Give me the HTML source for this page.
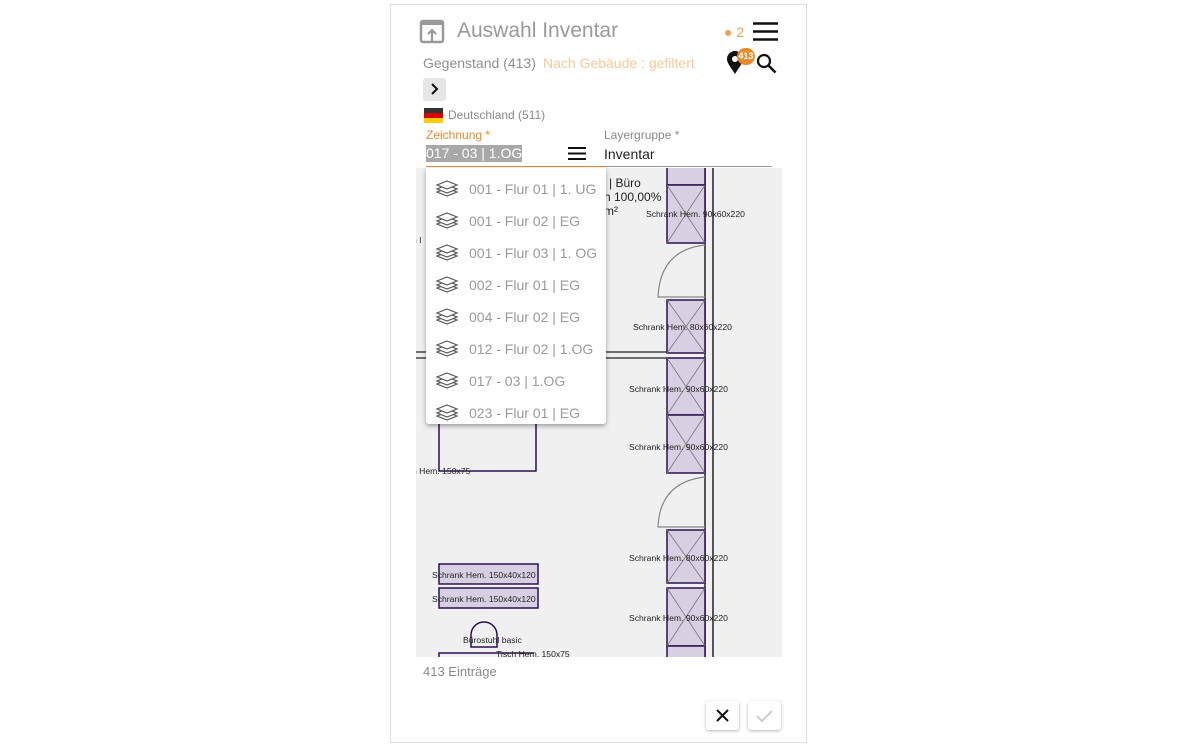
<!DOCTYPE html>
<html><head><meta charset="utf-8"><style>
body{margin:0;width:1200px;height:745px;background:#fff;font-family:"Liberation Sans",sans-serif;position:relative;overflow:hidden}
.a{position:absolute}
.card{left:390px;top:4px;width:415px;height:737px;border:1px solid #ddd;background:#fff}
.dd{left:426px;top:168px;width:180px;height:256px;background:#fff;box-shadow:0 2px 5px rgba(0,0,0,.35);border-radius:0 0 3px 3px;overflow:hidden}
.it{position:absolute;left:9px;height:32px;font-size:14px;color:#9a9a9a;display:flex;align-items:center;gap:10px;white-space:nowrap}
.btn{top:701px;width:33px;height:29px;background:#fff;border-radius:3px;box-shadow:0 1px 3px rgba(0,0,0,.3)}
</style></head><body>
<div class="a card"></div>
<svg class="a" style="left:419px;top:19px" width="26" height="26" viewBox="0 0 26 26"><rect x="2" y="2" width="22" height="21" rx="2" fill="none" stroke="#999" stroke-width="2.5"/><rect x="2" y="2" width="22" height="4" fill="#999"/><path d="M13 22V11M9 15l4-4 4 4" stroke="#999" stroke-width="2.2" fill="none"/></svg>
<div class="a" style="left:457px;top:19px;font-size:21px;color:#9a9a9a">Auswahl Inventar</div>
<div class="a" style="left:724px;top:24px;font-size:14px;color:#f0a050">● 2</div>
<svg class="a" style="left:752px;top:21px" width="27" height="21"><path d="M1 2.5h25M1 10.5h25M1 18.5h25" stroke="#111" stroke-width="2.6"/></svg>
<div class="a" style="left:423px;top:55px;font-size:14px;color:#8f8f8f">Gegenstand (413)</div>
<div class="a" style="left:543px;top:55px;font-size:14px;color:#f8c89a">Nach Gebäude : gefiltert</div>
<svg class="a" style="left:726px;top:51px" width="18" height="24"><path d="M9 23C4 15 1 12 1 8a8 8 0 0 1 16 0c0 4-3 7-8 15z" fill="#111"/><circle cx="9" cy="8" r="3" fill="#fff"/></svg>
<div class="a" style="left:737px;top:48px;width:18px;height:17px;border-radius:9px;background:#e88a2a;color:#fff;font-size:9px;font-weight:bold;text-align:center;line-height:17px">413</div>
<svg class="a" style="left:756px;top:53px" width="22" height="22"><circle cx="8" cy="8" r="6" fill="none" stroke="#111" stroke-width="2.2"/><path d="M12.5 12.5l7 7" stroke="#111" stroke-width="2.6"/></svg>
<div class="a" style="left:423px;top:78px;width:23px;height:23px;background:#e6e6e6;border-radius:3px"></div>
<svg class="a" style="left:428px;top:82px" width="14" height="14"><path d="M4 2l5 5-5 5" stroke="#111" stroke-width="2" fill="none"/></svg>
<div class="a" style="left:424px;top:108px;width:19px;height:5px;background:#333"></div>
<div class="a" style="left:424px;top:113px;width:19px;height:5px;background:#d00"></div>
<div class="a" style="left:424px;top:118px;width:19px;height:5px;background:#fc0"></div>
<div class="a" style="left:448px;top:108px;font-size:12px;color:#8a8a8a">Deutschland (511)</div>
<div class="a" style="left:426px;top:128px;font-size:12px;color:#e88a2a">Zeichnung *</div>
<div class="a" style="left:426px;top:145px;font-size:14px;color:#fff;background:#a8a8a8;line-height:17px">017 - 03 | 1.OG</div>
<svg class="a" style="left:567px;top:146px" width="20" height="15"><path d="M1 2h18M1 7.5h18M1 13h18" stroke="#111" stroke-width="2"/></svg>
<div class="a" style="left:426px;top:166px;width:178px;height:1px;background:#e88a2a"></div>
<div class="a" style="left:604px;top:128px;font-size:12px;color:#8a8a8a">Layergruppe *</div>
<div class="a" style="left:604px;top:146px;font-size:14px;color:#222">Inventar</div>
<div class="a" style="left:604px;top:166px;width:168px;height:1px;background:#999"></div>
<svg class="a" style="left:0;top:0" width="1200" height="745">
<defs><clipPath id="c"><rect x="416" y="168" width="366" height="489"/></clipPath></defs>
<g clip-path="url(#c)" font-family="Liberation Sans" font-size="8.6" fill="#222">
<rect x="416" y="168" width="366" height="489" fill="#f0f0f0"/>
<path d="M705 160V660M713 160V660" stroke="#222" stroke-width="1.5"/>
<path d="M416 352H667M416 358H667" stroke="#222" stroke-width="1.3"/>
<g fill="#d8d0e2" stroke="#2a1050" stroke-width="1.5">
<rect x="667" y="160" width="38" height="25"/><rect x="667" y="185" width="38" height="58"/><rect x="667" y="300" width="38" height="53"/><rect x="667" y="358" width="38" height="57"/><rect x="667" y="415" width="38" height="58"/><rect x="667" y="530" width="38" height="53"/><rect x="667" y="588" width="38" height="58"/><rect x="667" y="646" width="38" height="20"/>
<rect x="439" y="564" width="99" height="20"/><rect x="439" y="588" width="99" height="20"/>
</g>
<g stroke="#777" stroke-width="0.8"><path d="M667 185L705 243M705 185L667 243M667 300L705 353M705 300L667 353M667 358L705 415M705 358L667 415M667 415L705 473M705 415L667 473M667 530L705 583M705 530L667 583M667 588L705 646M705 588L667 646"/></g>
<g fill="none" stroke="#888" stroke-width="1.2"><path d="M705 245Q660 250 658 297H705M705 477Q660 482 658 527H705"/></g>
<rect x="439" y="420" width="97" height="51" fill="none" stroke="#2a1050" stroke-width="1.5"/>
<path d="M471 647v-12a13 13 0 0 1 26 0v12z" fill="none" stroke="#2a1050" stroke-width="1.5"/>
<path d="M439 657v-4h95" fill="none" stroke="#2a1050" stroke-width="1.5"/>
<text x="646" y="217">Schrank Hem. 90x60x220</text>
<text x="633" y="330">Schrank Hem. 80x60x220</text>
<text x="629" y="392">Schrank Hem. 90x60x220</text>
<text x="629" y="450">Schrank Hem. 90x60x220</text>
<text x="629" y="561">Schrank Hem. 80x60x220</text>
<text x="629" y="621">Schrank Hem. 90x60x220</text>
<text x="432" y="578">Schrank Hem. 150x40x120</text>
<text x="432" y="602">Schrank Hem. 150x40x120</text>
<text x="463" y="643">Bürostuhl basic</text>
<text x="496" y="657">Tisch Hem. 150x75</text>
<text x="412" y="474">h Hem. 150x75</text>
<text x="412" y="243">h I</text>
<text x="609" y="187" font-size="12">| Büro</text>
<text x="604" y="201" font-size="12">h 100,00%</text>
<text x="604" y="215" font-size="12">m²</text>
</g></svg>
<div class="a dd">
<div class="it" style="top:5px"><svg width="24" height="20" viewBox="0 0 24 20"><g fill="#fff" stroke="#555" stroke-width="1.2"><path d="M12 9l10 4-10 4-10-4z"/><path d="M12 6l10 4-10 4-10-4z"/><path d="M12 2l10 4-10 4-10-4z"/></g></svg>001 - Flur 01 | 1. UG</div>
<div class="it" style="top:37px"><svg width="24" height="20" viewBox="0 0 24 20"><g fill="#fff" stroke="#555" stroke-width="1.2"><path d="M12 9l10 4-10 4-10-4z"/><path d="M12 6l10 4-10 4-10-4z"/><path d="M12 2l10 4-10 4-10-4z"/></g></svg>001 - Flur 02 | EG</div>
<div class="it" style="top:69px"><svg width="24" height="20" viewBox="0 0 24 20"><g fill="#fff" stroke="#555" stroke-width="1.2"><path d="M12 9l10 4-10 4-10-4z"/><path d="M12 6l10 4-10 4-10-4z"/><path d="M12 2l10 4-10 4-10-4z"/></g></svg>001 - Flur 03 | 1. OG</div>
<div class="it" style="top:101px"><svg width="24" height="20" viewBox="0 0 24 20"><g fill="#fff" stroke="#555" stroke-width="1.2"><path d="M12 9l10 4-10 4-10-4z"/><path d="M12 6l10 4-10 4-10-4z"/><path d="M12 2l10 4-10 4-10-4z"/></g></svg>002 - Flur 01 | EG</div>
<div class="it" style="top:133px"><svg width="24" height="20" viewBox="0 0 24 20"><g fill="#fff" stroke="#555" stroke-width="1.2"><path d="M12 9l10 4-10 4-10-4z"/><path d="M12 6l10 4-10 4-10-4z"/><path d="M12 2l10 4-10 4-10-4z"/></g></svg>004 - Flur 02 | EG</div>
<div class="it" style="top:165px"><svg width="24" height="20" viewBox="0 0 24 20"><g fill="#fff" stroke="#555" stroke-width="1.2"><path d="M12 9l10 4-10 4-10-4z"/><path d="M12 6l10 4-10 4-10-4z"/><path d="M12 2l10 4-10 4-10-4z"/></g></svg>012 - Flur 02 | 1.OG</div>
<div class="it" style="top:197px"><svg width="24" height="20" viewBox="0 0 24 20"><g fill="#fff" stroke="#555" stroke-width="1.2"><path d="M12 9l10 4-10 4-10-4z"/><path d="M12 6l10 4-10 4-10-4z"/><path d="M12 2l10 4-10 4-10-4z"/></g></svg>017 - 03 | 1.OG</div>
<div class="it" style="top:229px"><svg width="24" height="20" viewBox="0 0 24 20"><g fill="#fff" stroke="#555" stroke-width="1.2"><path d="M12 9l10 4-10 4-10-4z"/><path d="M12 6l10 4-10 4-10-4z"/><path d="M12 2l10 4-10 4-10-4z"/></g></svg>023 - Flur 01 | EG</div>
</div>
<div class="a" style="left:423px;top:664px;font-size:13px;color:#8a8a8a">413 Einträge</div>
<div class="a btn" style="left:706px"><svg width="33" height="29"><path d="M11 9l11 11M22 9L11 20" stroke="#111" stroke-width="2"/></svg></div>
<div class="a btn" style="left:748px"><svg width="33" height="29"><path d="M9 15l5 5 10-10" stroke="#ccc" stroke-width="2" fill="none"/></svg></div>
</body></html>
